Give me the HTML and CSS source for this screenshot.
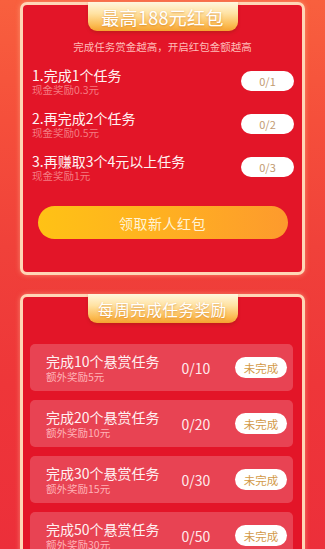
FILE: index.html
```html
<!DOCTYPE html>
<html lang="zh">
<head>
<meta charset="utf-8">
<link rel="stylesheet" href="styles.css">
</head>
<body>
<div class="page">
  <section class="card card-first">
    <div class="tab tab-big">最高188元红包</div>
    <p class="intro">完成任务赏金越高，开启红包金额越高</p>
    <ul class="steps">
      <li class="step">
        <div class="step-text"><div class="step-title">1.完成1个任务</div><div class="step-sub">现金奖励0.3元</div></div>
        <span class="pill">0/1</span>
      </li>
      <li class="step">
        <div class="step-text"><div class="step-title">2.再完成2个任务</div><div class="step-sub">现金奖励0.5元</div></div>
        <span class="pill">0/2</span>
      </li>
      <li class="step">
        <div class="step-text"><div class="step-title">3.再赚取3个4元以上任务</div><div class="step-sub">现金奖励1元</div></div>
        <span class="pill">0/3</span>
      </li>
    </ul>
    <button class="claim">领取新人红包</button>
  </section>

  <section class="card card-second">
    <div class="tab tab-small">每周完成任务奖励</div>
    <ul class="weekly">
      <li class="wrow">
        <div class="wtext"><div class="wtitle">完成10个悬赏任务</div><div class="wsub">额外奖励5元</div></div>
        <span class="wcount">0/10</span>
        <span class="wpill">未完成</span>
      </li>
      <li class="wrow">
        <div class="wtext"><div class="wtitle">完成20个悬赏任务</div><div class="wsub">额外奖励10元</div></div>
        <span class="wcount">0/20</span>
        <span class="wpill">未完成</span>
      </li>
      <li class="wrow">
        <div class="wtext"><div class="wtitle">完成30个悬赏任务</div><div class="wsub">额外奖励15元</div></div>
        <span class="wcount">0/30</span>
        <span class="wpill">未完成</span>
      </li>
      <li class="wrow">
        <div class="wtext"><div class="wtitle">完成50个悬赏任务</div><div class="wsub">额外奖励30元</div></div>
        <span class="wcount">0/50</span>
        <span class="wpill">未完成</span>
      </li>
    </ul>
  </section>
</div>
</body>
</html>
```

FILE: styles.css
```css
* { box-sizing: border-box; }
html, body {
  margin: 0;
  padding: 0;
  height: 100%;
  overflow: hidden;
}
body {
  font-family: "Noto Sans CJK SC", "Noto Sans", sans-serif;
  background: linear-gradient(180deg, #f8603e 0%, #f54f3b 22%, #f0413a 45%, #ee3639 70%, #ec2f3a 100%);
  color: #fff;
}
.page {
  padding: 2px 20px 0;
}
.card {
  background: #e31528;
  border: 3px solid #ffd6b6;
  border-radius: 7px;
  box-shadow: 0 0 5px rgba(255, 190, 150, 0.55);
}
.card-first {
  height: 273px;
}
.card-second {
  margin-top: 19px;
  height: 300px;
}
.tab {
  width: 150px;
  height: 29px;
  margin: -3px auto 0;
  border-radius: 0 0 9px 9px;
  background: linear-gradient(180deg, #fff7df 0%, #ffe2a2 40%, #fbbb52 80%, #f5a230 100%);
  box-shadow: 0 2px 3px rgba(160, 30, 20, 0.45);
  display: flex;
  align-items: center;
  justify-content: center;
  color: #fff;
  text-shadow: 0 1px 2px rgba(200, 110, 20, 0.55);
  white-space: nowrap;
}
.tab-big {
  font-size: 18px;
  letter-spacing: 0.3px;
}
.tab-small {
  font-size: 15.5px;
  letter-spacing: 0.6px;
}
.intro {
  margin: 9px 0 0;
  text-align: center;
  font-size: 10.5px;
  line-height: 14px;
  color: #ffbdb8;
}
.steps {
  list-style: none;
  margin: 12px 0 0;
  padding: 0 8px 0 9px;
  display: flex;
  flex-direction: column;
  gap: 13px;
}
.step {
  height: 30px;
  display: flex;
  align-items: center;
  justify-content: space-between;
}
.step-title {
  font-size: 14px;
  line-height: 18px;
  color: #fff3f3;
  white-space: nowrap;
}
.step-sub {
  font-size: 10.5px;
  line-height: 12px;
  color: #f47c82;
  white-space: nowrap;
}
.pill {
  width: 53px;
  height: 20px;
  border-radius: 10px;
  background: #fff;
  color: #c29a6f;
  font-size: 11px;
  display: flex;
  align-items: center;
  justify-content: center;
}
.claim {
  display: flex;
  align-items: center;
  justify-content: center;
  margin: 24px auto 0;
  width: 250px;
  height: 33px;
  border: 0;
  border-radius: 17px;
  background: linear-gradient(90deg, #ffc215 0%, #ffae22 55%, #fd9a2d 100%);
  color: #fff3d6;
  font-family: inherit;
  font-size: 14px;
  letter-spacing: 0.5px;
  padding: 0;
}
.weekly {
  list-style: none;
  margin: 21px 0 0;
  padding: 0 9px 0 7px;
  display: flex;
  flex-direction: column;
  gap: 9px;
}
.wrow {
  height: 47px;
  border-radius: 5px;
  background: rgba(255, 255, 255, 0.2);
  display: grid;
  grid-template-columns: minmax(0, 1fr) 50px 52px;
  column-gap: 14px;
  align-items: center;
  padding: 0 6px 0 16px;
}
.wtext {
  padding-top: 1px;
  white-space: nowrap;
}
.wtitle {
  font-size: 14px;
  line-height: 18px;
  color: #fff1f2;
}
.wsub {
  font-size: 10.5px;
  line-height: 14px;
  color: #ffb3b8;
}
.wcount {
  text-align: center;
  font-size: 14px;
  color: #ffe9ec;
}
.wpill {
  height: 21px;
  border-radius: 11px;
  background: #fff;
  color: #d39a48;
  font-size: 11.5px;
  display: flex;
  align-items: center;
  justify-content: center;
}
```
